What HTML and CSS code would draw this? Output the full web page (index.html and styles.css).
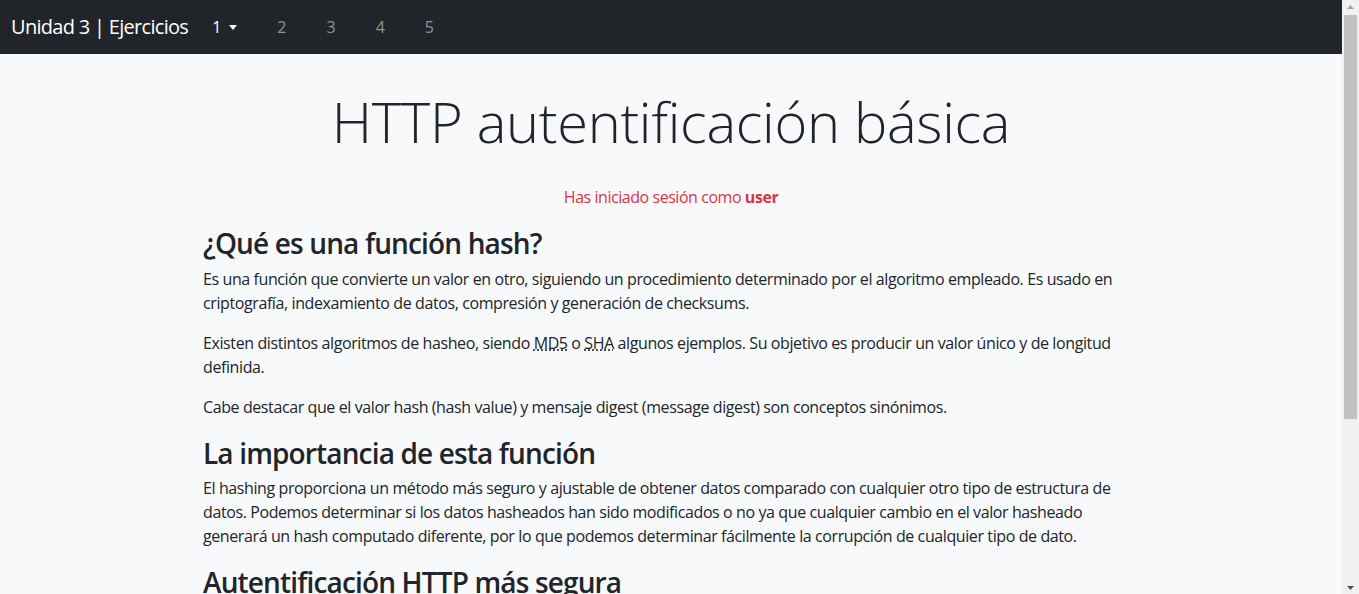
FILE: index.html
```html
<!DOCTYPE html>
<html lang="es">
<head>
<meta charset="utf-8">
<title>HTTP autentificación básica</title>
<link rel="stylesheet" href="styles.css">
</head>
<body>
<div class="page">
  <nav class="navbar">
    <a class="brand" href="#">Unidad 3 | Ejercicios</a>
    <ul class="nav">
      <li><a class="nav-link active" href="#">1<span class="caret"></span></a></li>
      <li><a class="nav-link" href="#">2</a></li>
      <li><a class="nav-link" href="#">3</a></li>
      <li><a class="nav-link" href="#">4</a></li>
      <li><a class="nav-link" href="#">5</a></li>
    </ul>
  </nav>
  <main class="container">
    <h1 class="title">HTTP autentificación básica</h1>
    <p class="login">Has iniciado sesión como <strong>user</strong></p>
    <h2>¿Qué es una función hash?</h2>
    <p>Es una función que convierte un valor en otro, siguiendo un procedimiento determinado por el algoritmo empleado. Es usado en criptografía, indexamiento de datos, compresión y generación de checksums.</p>
    <p>Existen distintos algoritmos de hasheo, siendo <abbr title="Message Digest 5">MD5</abbr> o <abbr title="Secure Hash Algorithm">SHA</abbr> algunos ejemplos. Su objetivo es producir un valor único y de longitud definida.</p>
    <p>Cabe destacar que el valor hash (hash value) y mensaje digest (message digest) son conceptos sinónimos.</p>
    <h2>La importancia de esta función</h2>
    <p>El hashing proporciona un método más seguro y ajustable de obtener datos comparado con cualquier otro tipo de estructura de datos. Podemos determinar si los datos hasheados han sido modificados o no ya que cualquier cambio en el valor hasheado generará un hash computado diferente, por lo que podemos determinar fácilmente la corrupción de cualquier tipo de dato.</p>
    <h2>Autentificación HTTP más segura</h2>
    <p>La autentificación básica envía las credenciales codificadas en Base64, lo que no supone ningún cifrado real. Por ello es recomendable almacenar las contraseñas en el servidor como valores hash y utilizar siempre una conexión HTTPS.</p>
  </main>
</div>
<div class="scrollbar" aria-hidden="true">
  <div class="sb-btn sb-up">
    <svg width="7" height="4" viewBox="0 0 7 4"><path d="M0 4 L3.5 0 L7 4 Z" fill="#a3a3a3"/></svg>
  </div>
  <div class="sb-thumb"></div>
  <div class="sb-fill"></div>
  <div class="sb-btn sb-down">
    <svg width="7" height="4" viewBox="0 0 7 4"><path d="M0 0 L7 0 L3.5 4 Z" fill="#505050"/></svg>
  </div>
</div>
</body>
</html>
```
FILE: styles.css
```css
html, body {
  margin: 0;
  padding: 0;
  height: 100%;
}
body {
  display: flex;
  overflow: hidden;
  background: #f8f9fa;
  color: #212529;
  font-family: "Open Sans", "Noto Sans", sans-serif;
  font-size: 16px;
  line-height: 1.5;
}
.page {
  flex: 1;
  min-width: 0;
  height: 100%;
  overflow: hidden;
}
.navbar {
  background: #212529;
  height: 54px;
  display: flex;
  align-items: center;
  padding: 0 11px;
  box-sizing: border-box;
}
.brand {
  color: #fff;
  font-size: 20px;
  letter-spacing: -0.7px;
  text-decoration: none;
  margin-right: 16px;
  white-space: nowrap;
}
.nav {
  list-style: none;
  margin: 0;
  padding: 0;
  display: flex;
  gap: 24px;
}
.nav-link {
  display: block;
  padding: 8px;
  color: rgba(255, 255, 255, 0.5);
  text-decoration: none;
}
.nav-link.active {
  color: #fff;
}
.caret {
  display: inline-block;
  margin-left: 8px;
  vertical-align: 3px;
  border-top: 5px solid;
  border-left: 4px solid transparent;
  border-right: 4px solid transparent;
}
.container {
  max-width: 936px;
  margin: 0 auto;
  letter-spacing: -0.4px;
}
.title {
  margin: 34px 0 30px;
  font-size: 56px;
  font-weight: 300;
  line-height: 1.2;
  letter-spacing: -0.3px;
  text-align: center;
}
.login {
  color: #dc3545;
  text-align: center;
  letter-spacing: -0.45px;
}
h2 {
  font-size: 28px;
  font-weight: 600;
  line-height: 1.2;
  letter-spacing: -0.85px;
  margin: 0 0 6px;
  padding-top: 2px;
}
p {
  margin: 0 0 16px;
}
abbr {
  text-decoration: underline dotted;
  cursor: help;
}
.scrollbar {
  flex: none;
  width: 17px;
  height: 100%;
  background: #f1f1f1;
  display: flex;
  flex-direction: column;
  align-items: center;
}
.sb-btn {
  flex: none;
  width: 17px;
  display: flex;
  justify-content: center;
}
.sb-up {
  height: 15px;
  padding-top: 5px;
  box-sizing: border-box;
}
.sb-down {
  height: 17px;
  padding-top: 9px;
  box-sizing: border-box;
}
.sb-btn svg {
  display: block;
}
.sb-thumb {
  flex: none;
  width: 13px;
  height: 404px;
  background: #c1c1c1;
}
.sb-fill {
  flex: 1;
}
```
